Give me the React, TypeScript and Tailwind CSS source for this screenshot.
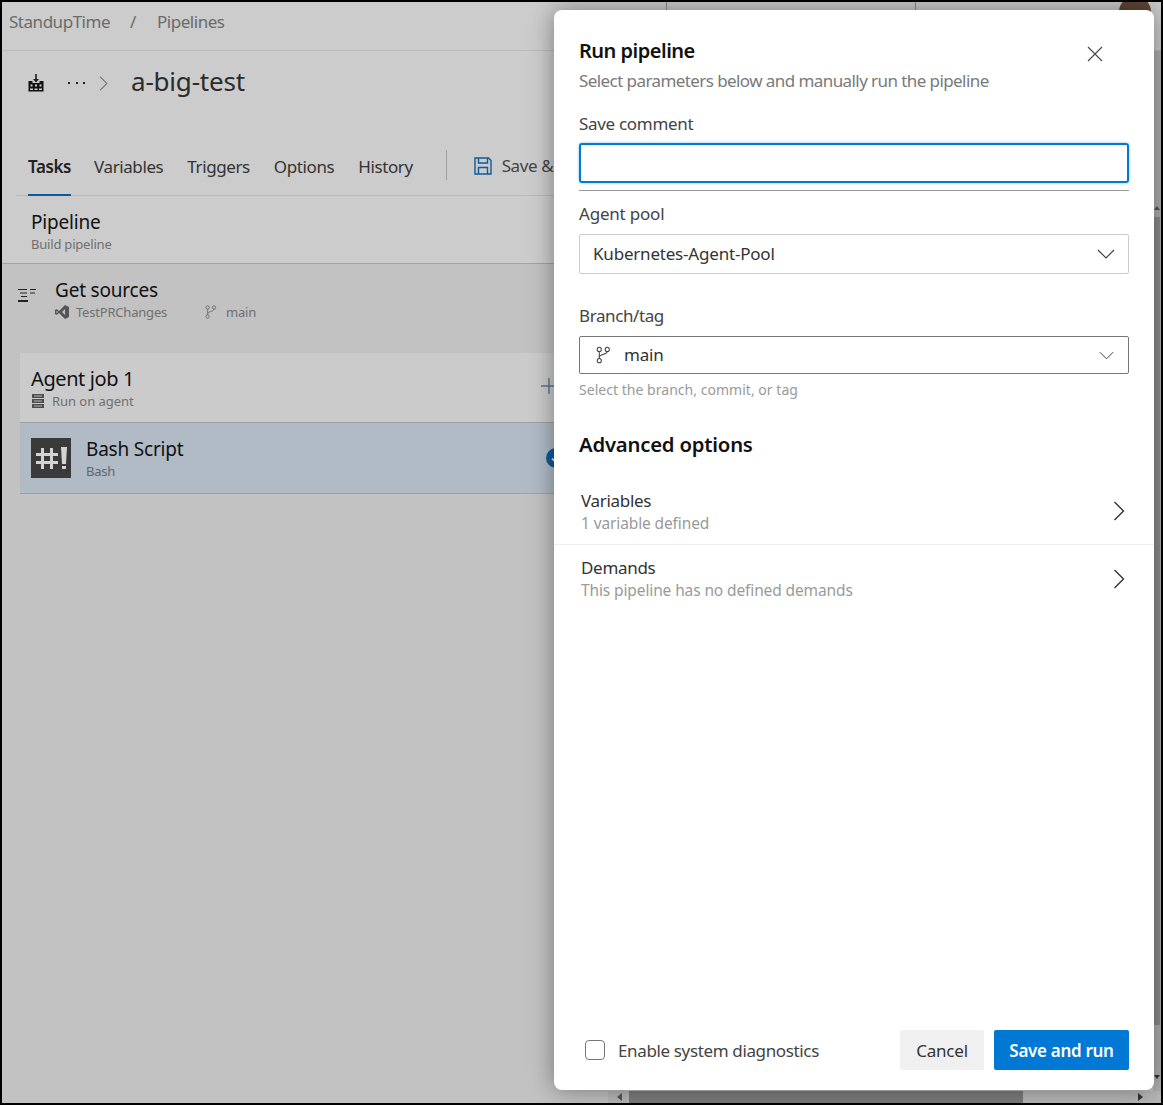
import React from "react";

const font = "font-['Noto_Sans',sans-serif]";

const BranchIcon = ({ className }: { className?: string }) => (
  <svg viewBox="0 0 16 18" fill="none" stroke="currentColor" strokeWidth="1.1" className={className}>
    <circle cx="3.5" cy="3" r="2.2" />
    <circle cx="12" cy="3" r="2.2" />
    <circle cx="3.5" cy="15" r="2.2" />
    <path d="M3.5 5.2v7.6M12 5.2c0 3.6-8.5 2.6-8.5 6.6" />
  </svg>
);

const Chevron = ({ className }: { className?: string }) => (
  <svg viewBox="0 0 12 20" fill="none" stroke="currentColor" strokeWidth="1.4" className={className}>
    <path d="M1.5 1l9 9-9 9" />
  </svg>
);

const ChevronDown = ({ className }: { className?: string }) => (
  <svg viewBox="0 0 18 10" fill="none" stroke="currentColor" strokeWidth="1.2" className={className}>
    <path d="M1 1l8 8 8-8" />
  </svg>
);

const PipelineIcon = () => (
  <svg viewBox="0 0 18 18" className="w-[18px] h-[18px]">
    <path d="M8.2 0h1.6v5h2.2L9 8.6 6 5h2.2z" fill="#1c1c1c" />
    <path d="M1.5 7h4v2h7V7h4v10.5h-15z" fill="#111" />
    <path d="M3.5 10.5h2v2h-2zM8 10.5h2v2H8zM12.5 10.5h2v2h-2z" fill="#ccc" />
    <path d="M3 14.5h3v1.5H3zM7.5 14.5h3v1.5h-3zM12 14.5h3v1.5h-3z" fill="#ccc" />
  </svg>
);

const SourcesIcon = () => (
  <svg viewBox="0 0 18 14" fill="none" stroke="#222" strokeWidth="1.2" className="w-[18px] h-[14px]">
    <path d="M0 1.5h9M12 1.5h6M2 5h7M12 5h5M3 8.5h6" />
    <path d="M0 13h10" strokeWidth="1.8" stroke="#111" />
  </svg>
);

const ReposIcon = () => (
  <svg viewBox="0 0 14 14" className="w-[14px] h-[14px]">
    <path d="M10 0l4 2v10l-4 2-6-6-2.5 2L0 9V5l1.5-1L4 6zM10 4L7 7l3 3zM1.5 5.5v3L3 7z" fill="#555" fillRule="evenodd" />
  </svg>
);

const ServerIcon = () => (
  <svg viewBox="0 0 12 14" className="w-[12px] h-[14px]">
    <path d="M0 0h12v4H0zM0 5h12v4H0zM0 10h12v4H0z" fill="#4d4d4d" />
    <path d="M2 1.5h8v1H2zM2 6.5h8v1H2zM2 11.5h8v1H2z" fill="#b5b5b5" />
  </svg>
);

const SaveIcon = () => (
  <svg viewBox="0 0 18 18" fill="none" stroke="#0f5a9c" strokeWidth="1.4" className="w-[18px] h-[18px]">
    <path d="M1 1h13.5L17 3.5V17H1z" />
    <path d="M4.5 1v5h9V1M4.5 17v-6.5h9V17" />
  </svg>
);

// bash task logo
const BashIcon = () => (
  <svg viewBox="0 0 40 40" className="w-[40px] h-[40px] shrink-0">
    <rect width="40" height="40" fill="#3a3a3a" />
    <path d="M5 15h22v3H5zM5 23h22v3H5zM10 10h3v21h-3zM19 10h3v21h-3z" fill="#d4d4d4" />
    <path d="M30 9h6l-1 17h-4zM31 28h4v3h-4z" fill="#d4d4d4" />
  </svg>
);

const tabs = ["Variables", "Triggers", "Options", "History"];

const App = () => {
  return (
    <div className={`${font} relative w-[1163px] h-[1105px] border-2 border-black bg-[#c2c2c2] overflow-hidden flex flex-col text-[#222] tracking-[-0.2px]`}>
      {/* top bar */}
      <div className="h-[49px] shrink-0 flex items-stretch border-b border-[#bababa] bg-[#cccccc]">
        <div className="w-[664px] pl-[7px] flex items-center pb-[8px] text-[17px] text-[#6b6b6b] tracking-[-0.47px]">
          <span className="w-[121px]">StandupTime</span>
          <span className="w-[27px]">/</span>
          <span>Pipelines</span>
        </div>
        <div className="w-[249px] border-l border-[#8a8a8a]" />
        <div className="flex-1 border-l border-[#8a8a8a] pl-[203px]">
          <div className="w-[32px] h-[34px] -mt-[6px] rounded-full bg-[#5f4536]" />
        </div>
      </div>

      <div className="flex-1 min-h-0 flex">
        <div className="flex-1 min-w-0 flex flex-col">
          <div className="bg-[#cccccc] h-[213px] shrink-0 flex flex-col">
            <div className="h-[64px] pl-[25px] flex items-center shrink-0">
              <PipelineIcon />
              <span className="ml-[23px] w-[17px] flex justify-between">
                <i className="w-[2px] h-[2px] bg-[#222]" />
                <i className="w-[2px] h-[2px] bg-[#222]" />
                <i className="w-[2px] h-[2px] bg-[#222]" />
              </span>
              <Chevron className="ml-[14px] w-[9px] h-[15px] text-[#666]" />
              <span className="ml-[23px] -mt-[4px] text-[26px] leading-[32px] text-[#2b2b2b]">a-big-test</span>
            </div>
            <div className="mt-[31px] ml-[14px] h-[50px] shrink-0 border-b border-[#bababa] flex items-start pl-[12px] tracking-[-0.4px]">
              <div className="h-[50px] mr-[-1px] flex items-center pb-[7px] border-b-2 border-[#0f5a9c] font-semibold text-[17px]">Tasks</div>
              {tabs.map((tab) => (
                <div key={tab} className="ml-[24px] h-[48px] flex items-center pb-[6px] text-[17px] text-[#333]">{tab}</div>
              ))}
              <div className="ml-[33px] mt-[4px] h-[30px] border-l border-[#a0a0a0]" />
              <div className="ml-[27px] h-[46px] flex items-center gap-[10px] pb-[6px] text-[17px] text-[#444]">
                <SaveIcon />
                <span className="whitespace-nowrap">Save &amp;</span>
              </div>
            </div>
            <div className="flex-1 pl-[29px] pt-[13px] border-b border-[#a3a3a3]">
              <div className="text-[19px] leading-[26px] text-[#111]">Pipeline</div>
              <div className="text-[13px] leading-[18px] text-[#6f6f6f]">Build pipeline</div>
            </div>
          </div>

          <div className="h-[89px] shrink-0 pl-[16px] pt-[14px] flex items-start">
            <div className="pt-[10px]"><SourcesIcon /></div>
            <div className="ml-[19px]">
              <div className="text-[19px] leading-[24px] text-[#111]">Get sources</div>
              <div className="flex items-center text-[13px] leading-[20px] text-[#6f6f6f]">
                <ReposIcon />
                <span className="ml-[7px] w-[129px]">TestPRChanges</span>
                <BranchIcon className="w-[12px] h-[14px] text-[#666]" />
                <span className="ml-[9px]">main</span>
              </div>
            </div>
          </div>

          <div className="ml-[18px] h-[69px] shrink-0 bg-[#cbcbcb] pl-[11px] pt-[13px] flex">
            <div className="w-[510px] shrink-0">
              <div className="text-[20px] leading-[26px] text-[#111] tracking-[-0.4px]">Agent job 1</div>
              <div className="flex items-center text-[13px] leading-[18px] text-[#6f6f6f] tracking-[-0.05px]">
                <span className="ml-[1px]"><ServerIcon /></span>
                <span className="ml-[8px]">Run on agent</span>
              </div>
            </div>
            <svg viewBox="0 0 16 16" fill="none" stroke="#5b7391" strokeWidth="1.4" className="w-[16px] h-[16px] mt-[12px] shrink-0">
              <path d="M0 8h16M8 0v16" />
            </svg>
          </div>
          <div className="ml-[18px] h-[72px] shrink-0 bg-[#b0bbc6] border-y border-[#a0a0a0] flex items-center pl-[11px]">
            <BashIcon />
            <div className="ml-[15px] w-[460px] shrink-0">
              <div className="text-[19px] leading-[26px] text-[#111]">Bash Script</div>
              <div className="text-[13px] leading-[18px] text-[#5e6670]">Bash</div>
            </div>
            <div className="w-[20px] h-[20px] shrink-0 rounded-full bg-[#0f5a9c] flex items-center justify-center">
              <svg viewBox="0 0 12 12" fill="none" stroke="#d8dee4" strokeWidth="1.8" className="w-[12px] h-[12px]">
                <path d="M2 6.5l3 3 5-6" />
              </svg>
            </div>
          </div>
        </div>

        {/* vertical scrollbar */}
        <div className="w-[8px] shrink-0 flex flex-col items-center pt-[155px] pb-[12px] pr-[1px] bg-[#aeaeae]">
          <span className="w-0 h-0 border-x-[3px] border-x-transparent border-b-[4px] border-b-[#555]" />
          <div className="mt-[7px] flex-1 self-stretch bg-[#8c8c8c]" />
          <span className="mt-[50px] w-0 h-0 border-x-[3px] border-x-transparent border-t-[4px] border-t-[#333]" />
        </div>
      </div>

      {/* bottom scrollbar */}
      <div className="h-[12px] shrink-0 ml-[606px] flex items-center bg-[#b8b8b8]">
        <span className="ml-[9px] w-0 h-0 border-y-[4px] border-y-transparent border-r-[5px] border-r-[#555]" />
        <div className="ml-[7px] w-[394px] h-[12px] bg-[#7d7d7d]" />
        <span className="ml-[115px] w-0 h-0 border-y-[4px] border-y-transparent border-l-[5px] border-l-[#333]" />
      </div>

      {/* dialog */}
      <div className="absolute left-[552px] top-[8px] w-[600px] h-[1080px] bg-white rounded-[8px] shadow-[0_0_24px_rgba(0,0,0,0.4)] flex flex-col">
        <div className="px-[25px] pt-[26px] flex justify-between items-start">
          <div>
            <div className="text-[20px] leading-[30px] font-semibold text-[#111] tracking-[-0.5px]">Run pipeline</div>
            <div className="text-[17px] leading-[24px] text-[#7a7a7a] mt-[3px] tracking-[-0.58px]">Select parameters below and manually run the pipeline</div>
          </div>
          <svg viewBox="0 0 16 16" fill="none" stroke="#444" strokeWidth="1.1" className="w-[16px] h-[16px] mt-[10px] mr-[26px]">
            <path d="M1 1l14 14M15 1L1 15" />
          </svg>
        </div>

        <div className="px-[25px]">
          <div className="mt-[19px] text-[17px] leading-[24px] text-[#444] tracking-[-0.3px]">Save comment</div>
          <div className="mt-[7px] h-[40px] rounded-[3px] border-2 border-[#0078d4] shadow-[0_0_3px_rgba(0,120,212,0.5)]" />
          <div className="mt-[7px] border-t border-[#999]" />
          <div className="mt-[11px] text-[17px] leading-[24px] text-[#444]">Agent pool</div>
          <div className="mt-[8px] h-[40px] rounded-[2px] border border-[#cccccc] flex items-center justify-between pl-[13px] pr-[13px] text-[17px] text-[#333]">
            <span>Kubernetes-Agent-Pool</span>
            <ChevronDown className="w-[18px] h-[10px] text-[#444]" />
          </div>
          <div className="mt-[30px] text-[17px] leading-[24px] text-[#444] tracking-[-0.4px]">Branch/tag</div>
          <div className="mt-[8px] h-[38px] rounded-[2px] border border-[#777] flex items-center justify-between pl-[16px] pr-[14px] text-[17px] text-[#333]">
            <div className="flex items-center gap-[13px]">
              <BranchIcon className="w-[15px] h-[18px] text-[#444]" />
              <span>main</span>
            </div>
            <ChevronDown className="w-[15px] h-[9px] text-[#444]" />
          </div>
          <div className="mt-[6px] text-[14px] leading-[20px] text-[#9a9a9a] tracking-[0.03px]">Select the branch, commit, or tag</div>
          <div className="mt-[29px] text-[20.3px] leading-[30px] font-semibold text-[#111]">Advanced options</div>
        </div>

        <div className="mt-[20px]">
          <div className="h-[66px] border-b border-[#eeeeee] pl-[27px] pr-[29px] flex items-center justify-between pb-[1px]">
            <div>
              <div className="text-[17px] leading-[23px] text-[#333] tracking-[-0.3px]">Variables</div>
              <div className="text-[15.5px] leading-[22px] text-[#9a9a9a] tracking-[-0.12px]">1 variable defined</div>
            </div>
            <Chevron className="w-[12px] h-[20px] text-[#333]" />
          </div>
          <div className="h-[69px] pl-[27px] pr-[29px] flex items-center justify-between pb-[2px]">
            <div>
              <div className="text-[17px] leading-[23px] text-[#333] tracking-[-0.3px]">Demands</div>
              <div className="text-[15.5px] leading-[22px] text-[#9a9a9a] tracking-[-0.12px]">This pipeline has no defined demands</div>
            </div>
            <Chevron className="w-[12px] h-[20px] text-[#333]" />
          </div>
        </div>

        <div className="mt-auto h-[60px] px-[25px] pl-[31px] flex items-start justify-between">
          <div className="flex items-center h-[40px]">
            <div className="w-[20px] h-[20px] rounded-[4px] border border-[#777]" />
            <span className="ml-[13px] pt-[2px] text-[17px] text-[#444] tracking-[-0.36px]">Enable system diagnostics</span>
          </div>
          <div className="flex gap-[10px]">
            <button className="w-[84px] h-[40px] pt-[2px] rounded-[2px] bg-[#f0f0f0] text-[17px] text-[#333]">Cancel</button>
            <button className="w-[135px] h-[40px] pt-[2px] rounded-[2px] bg-[#0078d4] text-[17px] font-semibold text-white tracking-[-0.3px]">Save and run</button>
          </div>
        </div>
      </div>
    </div>
  );
};

export default App;
